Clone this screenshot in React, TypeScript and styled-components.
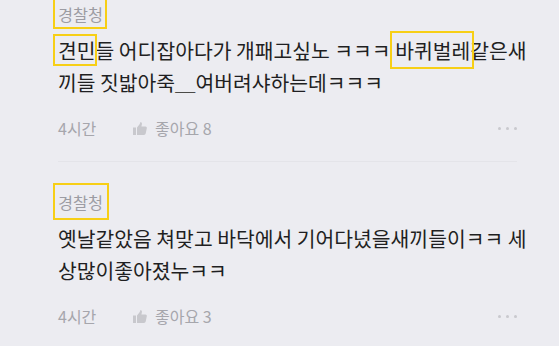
import React from 'react';
import styled, { createGlobalStyle } from 'styled-components';

const GlobalStyle = createGlobalStyle`
  html, body {
    margin: 0;
    padding: 0;
    background: #ececf1;
    overflow: hidden;
  }
  body {
    font-family: "Noto Sans CJK KR", "Noto Sans", sans-serif;
  }
`;

const Page = styled.div`
  width: 559px;
  height: 346px;
  box-sizing: border-box;
  padding: 0 42px 0 58px;
  overflow: hidden;
`;

const List = styled.div`
  margin-top: -5px;
`;

const Comment = styled.div`
  padding-bottom: 23px;
  border-bottom: 1px solid #e4e4e9;

  & + & {
    padding-top: 21px;
  }
`;

const NameRow = styled.div`
  height: 37px;
  display: flex;
  align-items: center;
`;

type Inset = { l?: number; r?: number; t?: number; b?: number };

// yellow marker drawn over the text, it doesn't move the words
const Marked = styled.span<{ $in?: Inset }>`
  position: relative;

  &::after {
    content: '';
    position: absolute;
    left: ${(p) => -(p.$in?.l ?? 5)}px;
    right: ${(p) => -(p.$in?.r ?? 1)}px;
    top: ${(p) => -(p.$in?.t ?? 1)}px;
    bottom: ${(p) => -(p.$in?.b ?? 1)}px;
    border: 2px solid #f7cf16;
    pointer-events: none;
  }
`;

const Name = styled.span`
  font-size: 16.3px;
  color: #9c9ca3;
`;

const Body = styled.div`
  margin-top: 2px;
  font-size: 20.4px;
  line-height: 32px;
  color: #1f1f22;
`;

const Line = styled.div`
  white-space: nowrap;
`;

const Meta = styled.div`
  margin-top: 20px;
  height: 20px;
  display: flex;
  align-items: center;
  font-size: 16px;
  color: #a6a6ac;
`;

const Time = styled.span`
  width: 75px;
`;

const Like = styled.span`
  display: flex;
  align-items: center;
  gap: 8px;
`;

const Dots = styled.span`
  margin-left: auto;
  display: flex;
  gap: 5px;

  i {
    width: 3px;
    height: 3px;
    border-radius: 50%;
    background: #c9c9ce;
  }
`;

const ThumbIcon = () => (
  <svg width="14" height="13" viewBox="0 0 14 13">
    <rect x="0" y="5.5" width="3" height="7.5" fill="#c8c8cd" />
    <path
      d="M4 5.5 L6.6 2.2 C7 1.6 7.2 0.8 7.4 0 C8.6 0 9.2 1 8.9 2.3 L8.4 4.5 L12.4 4.5 C13.4 4.5 14 5.3 13.8 6.2 L12.7 11.6 C12.5 12.5 11.9 13 11 13 L4 13 Z"
      fill="#c8c8cd"
    />
  </svg>
);

type Item = {
  name: string;
  nameBox: Inset;
  lines: React.ReactNode[];
  likes: number;
};

const items: Item[] = [
  {
    name: '경찰청',
    nameBox: { l: 5, r: 4, t: 8, b: 3 },
    lines: [
      <>
        <Marked>견민</Marked>들 어디잡아다가 개패고싶노 ㅋㅋㅋ{' '}
        <Marked $in={{ l: 5, r: 4, t: 4, b: 4 }}>바퀴벌레</Marked>같은새
      </>,
      '끼들 짓밟아죽＿여버려샤하는데ㅋㅋㅋ',
    ],
    likes: 8,
  },
  {
    name: '경찰청',
    nameBox: { l: 5, r: 6, t: 7, b: 6 },
    lines: ['옛날같았음 쳐맞고 바닥에서 기어다녔을새끼들이ㅋㅋ 세', '상많이좋아졌누ㅋㅋ'],
    likes: 3,
  },
];

const App = () => (
  <>
    <GlobalStyle />
    <Page>
      <List>
        {items.map((it, i) => (
          <Comment key={i}>
            <NameRow>
              <Marked $in={it.nameBox}>
                <Name>{it.name}</Name>
              </Marked>
            </NameRow>
            <Body>
              {it.lines.map((l, j) => (
                <Line key={j}>{l}</Line>
              ))}
            </Body>
            <Meta>
              <Time>4시간</Time>
              <Like>
                <ThumbIcon />
                좋아요 {it.likes}
              </Like>
              <Dots>
                <i />
                <i />
                <i />
              </Dots>
            </Meta>
          </Comment>
        ))}
      </List>
    </Page>
  </>
);

export default App;
